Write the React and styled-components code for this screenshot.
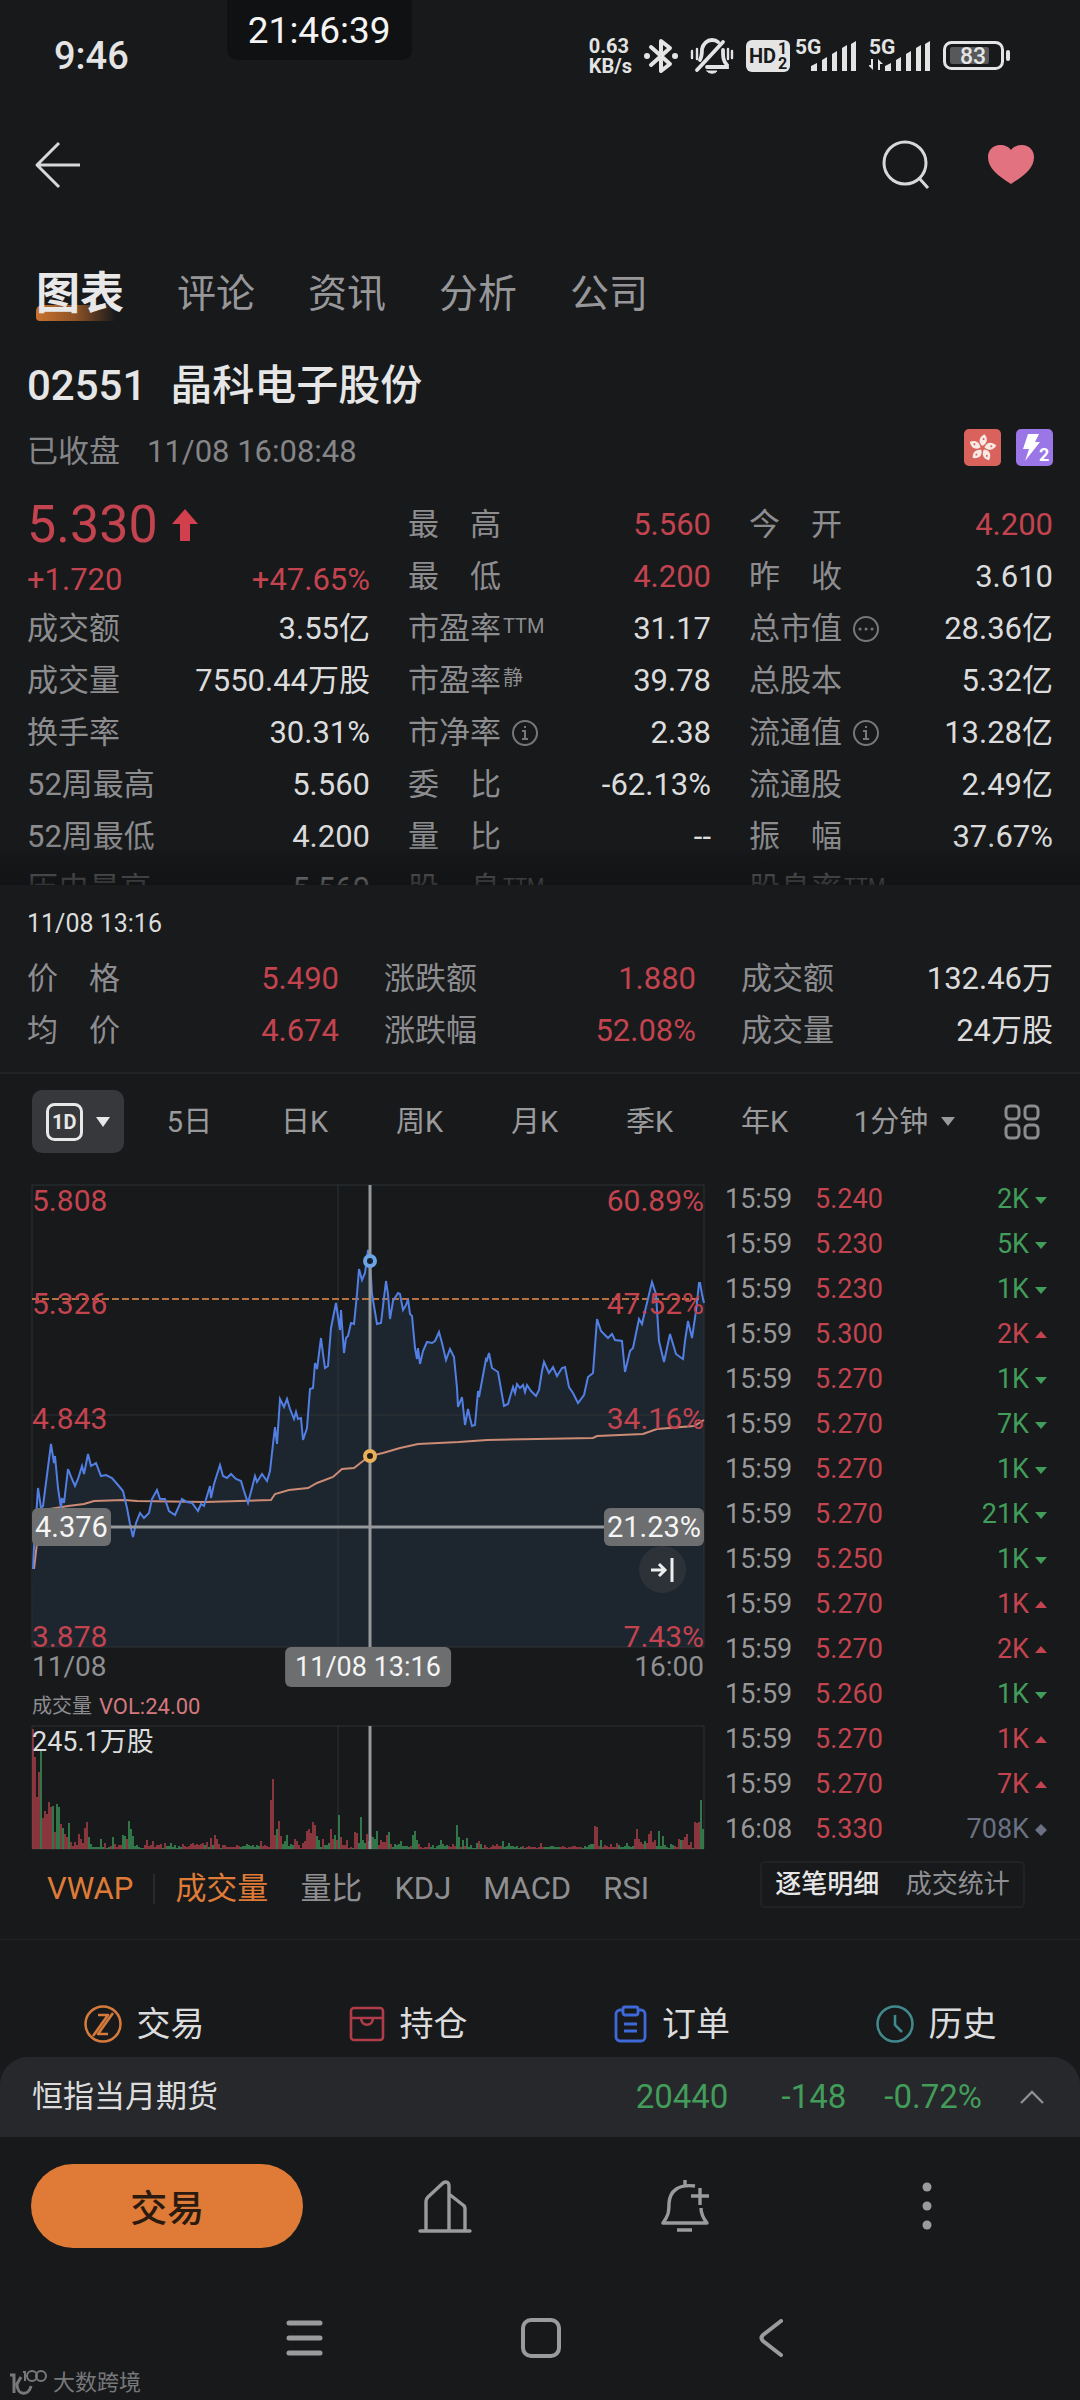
import styled, { createGlobalStyle, ThemeProvider } from 'styled-components';

const theme = {
  colors: {
    bg: '#17191b',
    panel: '#191a1c',
    raised: '#26282b',
    line: '#222326',
    text: '#dcdcdd',
    muted: '#8d8d90',
    red: '#c3434f',
    green: '#429c5a',
    orange: '#df7b37',
    flat: '#6a7182',
    tag: '#6d6e6f',
  },
  sizes: {
    small: '20px',
    tape: '27px',
    toolbar: '29px',
    body: '31px',
  },
};

const GlobalStyle = createGlobalStyle`
  * {
    box-sizing: border-box;
  }

  body {
    margin: 0;
    background: ${theme.colors.bg};
    color: ${theme.colors.text};
    font-family: Roboto, 'Noto Sans CJK SC', sans-serif;
    font-size: ${theme.sizes.body};
  }

  button {
    margin: 0;
    padding: 0;
    border: 0;
    background: none;
    color: inherit;
    font: inherit;
    cursor: pointer;
  }

  svg {
    display: block;
    flex: none;
  }

  dl,
  dt,
  dd,
  h1 {
    margin: 0;
    font-weight: 400;
  }
`;

const tone = ({ theme, $tone }) => theme.colors[$tone || 'text'];

const Page = styled.div`
  display: flex;
  flex-direction: column;
  min-height: 100vh;
`;

/* status bar */

const StatusBar = styled.header`
  position: relative;
  display: flex;
  align-items: center;
  justify-content: space-between;
  height: 112px;
  padding: 0 70px 0 54px;
  color: #e4e4e5;
`;

const Clock = styled.span`
  font-size: 38px;
  font-weight: 500;
  line-height: 40px;
`;

const FloatingClock = styled.div`
  position: absolute;
  top: 0;
  left: 21%;
  padding: 11px 21px 9px;
  border-radius: 0 0 10px 10px;
  background: #101113;
  color: #f4f4f4;
  font-size: 37px;
  line-height: 40px;
`;

const StatusIcons = styled.div`
  display: flex;
  align-items: center;
  gap: 12px;
`;

const CarrierIcons = styled.div`
  display: flex;
  align-items: center;
  gap: 5px;
`;

const NetSpeed = styled.span`
  display: flex;
  flex-direction: column;
  font-size: 20px;
  font-weight: 700;
  line-height: 20px;
`;

const SvgText = styled.text`
  font-family: Roboto, sans-serif;
  font-size: ${props => props.$size}px;
  font-weight: ${props => props.$weight || 700};
`;

/* top navigation */

const TopBar = styled.nav`
  display: flex;
  align-items: center;
  justify-content: space-between;
  height: 106px;
  padding: 0 46px 0 34px;
`;

const TopActions = styled.div`
  display: flex;
  align-items: center;
  gap: 57px;
`;

const Tabs = styled.nav`
  display: flex;
  align-items: center;
  gap: 53px;
  height: 60px;
  margin-top: 46px;
  padding: 0 36px;
`;

const Tab = styled.button`
  position: relative;
  z-index: 0;
  color: ${props => (props.$active ? '#e8e8e8' : '#97979a')};
  font-size: ${props => (props.$active ? '44px' : '39px')};
  font-weight: ${props => (props.$active ? 700 : 400)};
  line-height: 60px;

  &::before {
    content: '';
    display: ${props => (props.$active ? 'block' : 'none')};
    position: absolute;
    z-index: -1;
    left: 0;
    bottom: 3px;
    width: 80px;
    height: 16px;
    border-radius: 6px 0 0 4px;
    background: linear-gradient(90deg, #c9722f, #8d5226 50%, transparent);
  }
`;

/* quote head */

const QuoteHead = styled.section`
  padding: 32px 27px 0;
`;

const StockName = styled.h1`
  display: flex;
  gap: 24px;
  font-size: 42px;
  font-weight: 500;
  line-height: 60px;
  color: #e6e6e6;
`;

const SessionRow = styled.div`
  display: flex;
  align-items: center;
  gap: 27px;
  margin-top: 13px;
  color: #858588;
  line-height: 40px;
`;

const Badges = styled.div`
  display: flex;
  gap: 15px;
  margin-left: auto;
  margin-bottom: 8px;
`;

const Stats = styled.section`
  position: relative;
  display: grid;
  grid-template-columns: 343fr 303fr 304fr;
  gap: 38px;
  height: 397px;
  margin-top: 14px;
  padding: 11px 27px 0;
  overflow: hidden;

  &::after {
    content: '';
    position: absolute;
    inset: auto 0 0;
    height: 44px;
    background: linear-gradient(transparent, rgba(16, 17, 18, 0.75));
  }
`;

const StatColumn = styled.dl`
  min-width: 0;
`;

const StatRow = styled.div`
  display: flex;
  align-items: center;
  justify-content: space-between;
  height: 52px;
  line-height: 52px;
  white-space: nowrap;
`;

const StatLabel = styled.dt`
  display: flex;
  align-items: center;
  gap: ${props => (props.$icon ? '11px' : '2px')};
  color: ${props => props.theme.colors.muted};
`;

const StatValue = styled.dd`
  color: ${tone};
`;

const LabelNote = styled.small`
  align-self: flex-start;
  font-size: 20px;
  line-height: 46px;
`;

const LastPrice = styled.div`
  display: flex;
  align-items: center;
  gap: 14px;
  height: 52px;
  color: ${props => props.theme.colors.red};
  font-size: 52px;
  line-height: 52px;
`;

const Change = styled.div`
  display: flex;
  justify-content: space-between;
  height: 52px;
  padding-top: 3px;
  color: ${props => props.theme.colors.red};
  line-height: 52px;
`;

/* values under the crosshair */

const CursorPanel = styled.section`
  padding: 19px 27px 15px;
  border-bottom: 2px solid ${props => props.theme.colors.line};
  background: ${props => props.theme.colors.panel};
`;

const CursorTime = styled.time`
  display: block;
  margin-bottom: 9px;
  font-size: 25px;
  line-height: 40px;
`;

const CursorGrid = styled.dl`
  display: grid;
  grid-template-columns: repeat(3, 1fr);
  column-gap: 45px;
`;

/* chart */

const PeriodBar = styled.div`
  display: grid;
  grid-template-columns: 100px repeat(6, 115fr) 165fr 61px;
  align-items: center;
  padding: 16px 32px 0;
  color: #9a9a9c;
  font-size: ${props => props.theme.sizes.toolbar};
`;

const ActivePeriod = styled.button`
  display: flex;
  align-items: center;
  justify-content: center;
  gap: 13px;
  width: 92px;
  height: 63px;
  border-radius: 10px;
  background: #37383b;
  color: #e8e8e8;
`;

const Period = styled.button`
  display: flex;
  align-items: center;
  justify-content: center;
  gap: 13px;
  line-height: 62px;
  white-space: nowrap;
`;

const LayoutButton = styled.button`
  justify-self: end;
  padding-right: 8px;
`;

const MarketArea = styled.section`
  display: grid;
  grid-template-columns: 672fr 322fr;
  column-gap: 21px;
  padding: 24px 33px 22px 32px;
  border-bottom: 1px solid #232427;
`;

const ChartColumn = styled.div`
  min-width: 0;
  padding-top: 8px;
`;

const Plot = styled.div`
  position: relative;
  height: ${props => props.$height}px;
`;

const PlotSvg = styled.svg`
  width: 100%;
  height: 100%;
  overflow: visible;
`;

const AxisLabel = styled.span`
  position: absolute;
  top: ${props => props.$top}px;
  ${props => (props.$right ? 'right: 0;' : 'left: 0;')}
  color: ${tone};
  font-size: ${props => (props.$tone ? '30px' : '27px')};
  line-height: 32px;
`;

const CursorTag = styled.span`
  position: absolute;
  padding: 0 3px;
  border-radius: 6px;
  background: ${props => props.theme.colors.tag};
  color: #f5f5f5;
  font-size: 29px;
  line-height: 38px;
`;

const PriceTag = styled(CursorTag)`
  top: 323px;
  ${props => (props.$right ? 'right: 0;' : 'left: 0;')}
`;

const TimeTag = styled(CursorTag)`
  top: 0;
  left: 50%;
  padding: 0 10px;
  transform: translateX(-50%);
  white-space: nowrap;
  font-size: 27px;
  line-height: 40px;
`;

const JumpButton = styled.button`
  position: absolute;
  right: 18px;
  bottom: 54px;
  display: grid;
  place-items: center;
  width: 47px;
  height: 47px;
  border-radius: 50%;
  background: #2c3238;
`;

const TimeAxis = styled.div`
  position: relative;
  display: flex;
  justify-content: space-between;
  color: #8f8f92;
  font-size: 28px;
  line-height: 40px;
`;

const VolumeCaption = styled.div`
  display: flex;
  gap: 7px;
  color: ${props => props.theme.colors.muted};
  font-size: ${props => props.theme.sizes.small};
  line-height: 39px;

  b {
    color: #d3787d;
    font-size: 22px;
    font-weight: 400;
  }
`;

const Indicators = styled.div`
  display: flex;
  align-items: center;
  gap: 32px;
  margin-top: 12px;
  padding-left: 15px;
`;

const Indicator = styled.button`
  color: ${props => (props.$active ? props.theme.colors.orange : '#8f8f92')};
  line-height: 56px;
  white-space: nowrap;
`;

const Separator = styled.i`
  width: 2px;
  height: 30px;
  margin: 0 -12px;
  background: #2a2b2e;
`;

/* trade tape */

const Tape = styled.table`
  width: 100%;
  border-collapse: collapse;
  font-size: ${props => props.theme.sizes.tape};

  td {
    height: 45px;
    padding: 0;
    line-height: 45px;
  }
`;

const TimeCell = styled.td`
  width: 90px;
  color: #98989a;
`;

const PriceCell = styled.td`
  color: ${props => props.theme.colors.red};
`;

const SizeCell = styled.td`
  color: ${tone};

  div {
    display: flex;
    align-items: center;
    justify-content: flex-end;
    gap: 6px;
  }
`;

const TapeSwitch = styled.div`
  display: flex;
  margin: 9px 22px 0 35px;
  border: 2px solid #202225;
  border-radius: 5px;
`;

const TapeMode = styled.button`
  flex: 1;
  color: ${props => (props.$active ? '#e6e6e6' : '#8f8f92')};
  font-size: 26px;
  font-weight: ${props => (props.$active ? 500 : 400)};
  line-height: 43px;
  white-space: nowrap;
`;

/* bottom */

const QuickActions = styled.div`
  display: grid;
  grid-template-columns: repeat(4, 1fr);
  margin-top: 51px;
  padding: 0 12px;
`;

const QuickAction = styled.button`
  display: flex;
  align-items: center;
  justify-content: center;
  gap: 15px;
  height: 66px;
  font-size: 34px;
  line-height: 48px;
`;

const IndexBar = styled.div`
  display: flex;
  align-items: center;
  gap: 38px;
  height: 80px;
  padding: 0 36px 0 32px;
  border-radius: 28px 28px 0 0;
  background: ${props => props.theme.colors.raised};
  line-height: 76px;
`;

const IndexName = styled.span`
  margin-right: auto;
`;

const IndexValue = styled.span`
  min-width: 80px;
  color: ${props => props.theme.colors.green};
  font-size: 33px;
  text-align: right;
`;

const ActionBar = styled.div`
  display: grid;
  grid-template-columns: 293fr 241fr 241fr 241fr;
  align-items: center;
  justify-items: center;
  padding: 27px 33px 0 31px;
`;

const TradeButton = styled.button`
  justify-self: start;
  width: 93%;
  height: 84px;
  border-radius: 42px;
  background: ${props => props.theme.colors.orange};
  color: #2b1a10;
  font-size: 37px;
  font-weight: 500;
`;

const SystemNav = styled.nav`
  display: flex;
  align-items: center;
  justify-content: space-between;
  width: 46%;
  height: 60px;
  margin: 60px 0 0 26.5%;
`;

const Watermark = styled.footer`
  display: flex;
  align-items: center;
  gap: 6px;
  padding: 2px 0 6px 9px;
  color: #77787a;
  font-size: 22px;
  line-height: 26px;
`;

const stats = [
  [
    ['成交额', '3.55亿'],
    ['成交量', '7550.44万股'],
    ['换手率', '30.31%'],
    ['52周最高', '5.560'],
    ['52周最低', '4.200'],
    ['历史最高', '5.560'],
  ],
  [
    ['最　高', '5.560', { tone: 'red' }],
    ['最　低', '4.200', { tone: 'red' }],
    ['市盈率', '31.17', { note: 'TTM' }],
    ['市盈率', '39.78', { note: '静' }],
    ['市净率', '2.38', { icon: 'info' }],
    ['委　比', '-62.13%'],
    ['量　比', '--'],
    ['股　息', '', { note: 'TTM' }],
  ],
  [
    ['今　开', '4.200', { tone: 'red' }],
    ['昨　收', '3.610'],
    ['总市值', '28.36亿', { icon: 'more' }],
    ['总股本', '5.32亿'],
    ['流通值', '13.28亿', { icon: 'info' }],
    ['流通股', '2.49亿'],
    ['振　幅', '37.67%'],
    ['股息率', '', { note: 'TTM' }],
  ],
];

const cursorStats = [
  ['价　格', '5.490', 'red'],
  ['涨跌额', '1.880', 'red'],
  ['成交额', '132.46万'],
  ['均　价', '4.674', 'red'],
  ['涨跌幅', '52.08%', 'red'],
  ['成交量', '24万股'],
];

const periods = ['5日', '日K', '周K', '月K', '季K', '年K'];

const trades = [
  ['15:59', '5.240', '2K', 'green'],
  ['15:59', '5.230', '5K', 'green'],
  ['15:59', '5.230', '1K', 'green'],
  ['15:59', '5.300', '2K', 'red'],
  ['15:59', '5.270', '1K', 'green'],
  ['15:59', '5.270', '7K', 'green'],
  ['15:59', '5.270', '1K', 'green'],
  ['15:59', '5.270', '21K', 'green'],
  ['15:59', '5.250', '1K', 'green'],
  ['15:59', '5.270', '1K', 'red'],
  ['15:59', '5.270', '2K', 'red'],
  ['15:59', '5.260', '1K', 'green'],
  ['15:59', '5.270', '1K', 'red'],
  ['15:59', '5.270', '7K', 'red'],
  ['16:08', '5.330', '708K', 'flat'],
];

const pricePoints =
  '1,384 2,362 6,303 9,323 11,321 19,259 22,278 23,271 26,303 29,323 30,313 32,318 36,284 40,294 43,301 46,294 50,281 52,289 56,269 59,281 64,278 69,291 74,290 80,293 86,300 91,306 95,323 98,339 101,352 104,338 108,328 112,333 117,328 120,314 125,305 128,314 133,314 137,326 143,330 147,321 150,314 155,317 160,318 166,326 169,319 172,321 175,311 178,301 179,313 182,299 188,280 191,291 195,293 199,289 204,294 209,296 212,306 216,318 220,303 223,291 225,297 230,289 235,296 238,286 241,259 243,242 245,259 248,214 252,222 255,214 258,224 262,234 264,227 266,234 269,233 271,255 275,243 278,204 281,203 283,178 285,184 289,153 291,169 293,183 296,181 299,143 304,118 308,145 309,125 312,168 314,153 316,151 319,138 322,139 325,109 327,84 330,95 333,88 336,65 338,76 340,109 345,139 349,138 351,121 354,96 356,109 358,134 361,116 366,108 368,109 371,125 374,120 376,114 378,129 380,131 383,163 385,174 386,163 388,179 391,166 395,157 400,158 403,156 407,147 410,158 414,175 418,164 422,172 425,203 426,222 430,212 433,240 436,224 438,233 440,241 443,240 446,206 447,212 454,174 455,175 457,168 460,183 466,187 472,221 476,219 478,212 481,202 483,208 485,199 488,203 491,200 493,207 495,200 499,206 504,211 507,205 510,186 512,177 517,188 521,182 525,191 530,183 533,182 537,202 541,208 546,218 552,210 556,192 561,188 565,134 569,146 574,151 576,153 580,149 583,155 590,156 593,187 598,166 601,163 607,134 610,139 613,126 620,97 624,109 627,156 632,177 638,149 644,169 648,172 651,174 653,156 656,136 660,153 664,126 667,98 668,98 670,109 672,118';

const averagePoints =
  '2,384 5,358 10,334 18,324 36,321 52,319 62,316 92,315 105,316 174,317 239,315 243,309 257,305 276,303 285,298 301,292 310,284 322,283 331,276 338,271 351,268 368,263 386,259 427,257 455,255 561,253 565,251 611,249 625,244 662,241 672,235';

// [x, height, colour]
const volumeSpikes = [
  [0, 120, 'r'], [2, 92, 'r'], [4, 52, 'r'], [6, 77, 'r'], [8, 98, 'g'], [10, 31, 'r'],
  [12, 38, 'r'], [14, 35, 'r'], [16, 47, 'r'], [18, 42, 'r'], [20, 43, 'g'], [22, 17, 'r'],
  [24, 45, 'g'], [26, 42, 'g'], [28, 25, 'r'], [30, 21, 'g'], [32, 15, 'r'], [34, 12, 'r'],
  [36, 26, 'g'], [46, 15, 'r'], [48, 10, 'r'], [52, 21, 'r'], [54, 27, 'r'], [56, 12, 'g'],
  [68, 10, 'g'], [80, 12, 'g'], [90, 14, 'g'], [92, 13, 'g'], [94, 10, 'r'], [96, 28, 'g'],
  [98, 20, 'g'], [100, 13, 'g'], [114, 9, 'r'], [120, 8, 'r'], [174, 7, 'r'], [178, 11, 'r'],
  [182, 14, 'r'], [184, 10, 'r'], [228, 8, 'r'], [238, 49, 'r'], [240, 70, 'r'], [242, 14, 'r'],
  [244, 20, 'g'], [246, 28, 'r'], [248, 13, 'r'], [254, 14, 'g'], [262, 10, 'r'], [274, 18, 'r'],
  [276, 20, 'r'], [278, 16, 'r'], [280, 27, 'r'], [282, 24, 'r'], [284, 13, 'g'], [290, 10, 'r'],
  [298, 20, 'r'], [302, 14, 'g'], [306, 34, 'g'], [308, 12, 'r'], [322, 17, 'r'], [324, 16, 'r'],
  [328, 32, 'g'], [334, 15, 'r'], [338, 13, 'r'], [340, 12, 'g'], [342, 10, 'g'], [344, 18, 'g'],
  [354, 14, 'r'], [356, 17, 'g'], [368, 8, 'g'], [380, 14, 'g'], [382, 18, 'g'], [384, 9, 'g'],
  [408, 9, 'g'], [424, 24, 'g'], [426, 12, 'g'], [430, 9, 'g'], [434, 11, 'g'], [446, 8, 'r'],
  [470, 8, 'g'], [508, 6, 'r'], [562, 23, 'r'], [564, 22, 'r'], [568, 9, 'g'], [604, 20, 'r'],
  [606, 10, 'r'], [612, 8, 'g'], [616, 15, 'r'], [618, 18, 'r'], [622, 9, 'r'], [626, 18, 'g'],
  [630, 13, 'g'], [648, 9, 'g'], [652, 12, 'r'], [654, 15, 'r'], [662, 27, 'r'], [664, 26, 'r'],
  [666, 27, 'r'], [668, 49, 'g'], [670, 20, 'g'],
];

const volumeBars = Array.from({ length: 336 }, (_, i) => {
  const x = i * 2;
  const spike = volumeSpikes.find(([at]) => at === x);
  if (spike) return { x, h: spike[1], up: spike[2] === 'r' };
  const seed = Math.abs(Math.sin(i * 127.1) * 43758.5) % 1;
  const busy = (x > 240 && x < 360) || x < 60 || x > 600;
  const quiet = x > 476 && x < 556;
  const top = busy ? 9 : quiet ? 2 : 5;
  return { x, h: 1 + Math.round(seed * top), up: Math.sin(i / 3) + seed > 0.4 };
});

const Bluetooth = () => (
  <svg width="34" height="38" viewBox="0 0 34 38" fill="none" stroke="currentColor" strokeWidth="4">
    <path d="M7 10 26 27 17 34V4l9 7L7 28" strokeLinejoin="round" strokeLinecap="round" />
    <circle cx="3" cy="19" r="3" fill="currentColor" stroke="none" />
    <circle cx="31" cy="19" r="3" fill="currentColor" stroke="none" />
  </svg>
);

const MutedBell = () => (
  <svg width="44" height="36" viewBox="0 0 44 36" fill="none" stroke="currentColor" strokeWidth="3.8" strokeLinecap="round">
    <path d="M33 4 7 32M10 22c2-4 2-7 2-11 1-5 5-9 10-9 2 0 4 0 6 2" />
    <path d="M33 12c0 7 0 11 4 15v2H17" />
    <path d="M17 33h10c-2 3-8 3-10 0z" fill="currentColor" strokeWidth="1" />
    <path d="M2 13v7M7 11v10M38 11v10M42 13v7" strokeWidth="2.4" />
  </svg>
);

const HdBadge = () => (
  <svg width="44" height="34" viewBox="0 0 44 34">
    <rect y="1" width="44" height="32" rx="6" fill="currentColor" />
    <SvgText $size={20} x="3" y="24" fill="#17191b">HD</SvgText>
    <SvgText $size={16} x="32" y="15" fill="#17191b">1</SvgText>
    <SvgText $size={16} x="32" y="30" fill="#17191b">2</SvgText>
  </svg>
);

const Signal = ({ active }) => (
  <svg width="62" height="36" viewBox="0 0 62 36" fill="currentColor">
    <SvgText $size={21} x="0" y="16">5G</SvgText>
    <path d="M16 33v-5l6-3v8zM27 33V22l5-3v14zM37 33V16l5-3v20zM47 33V10l5-3v26zM56 33V6l5-3v30z" />
    {active && <path d="M4 21v11L-1 27h3v-6zM9 32V21l5 5h-3v6z" />}
  </svg>
);

const Battery = () => (
  <svg width="67" height="30" viewBox="0 0 67 30" fill="none">
    <rect x="1.5" y="1.5" width="58" height="26" rx="7" stroke="currentColor" strokeWidth="3" />
    <rect x="7" y="6" width="39" height="17" rx="2" fill="#57585a" />
    <rect x="63" y="9" width="4" height="11" rx="2" fill="currentColor" />
    <SvgText $size={23} $weight={500} x="17" y="23" fill="currentColor">83</SvgText>
  </svg>
);

const HongKongFlag = () => (
  <svg width="37" height="37" viewBox="0 0 37 37" role="img" aria-label="港股">
    <rect width="37" height="37" rx="5" fill="#d9635c" />
    {[10, 82, 154, 226, 298].map(angle => (
      <g key={angle} transform={`rotate(${angle} 18.5 19)`}>
        <path d="M18 17c-5-3-5-8 0-12 4 3 5 8 0 12z" fill="#f7e9e4" />
        <circle cx="18" cy="10" r="1" fill="#d9635c" />
      </g>
    ))}
  </svg>
);

const LevelTwo = () => (
  <svg width="37" height="37" viewBox="0 0 37 37">
    <rect width="37" height="37" rx="5" fill="#9a76e6" />
    <path d="M12 5h11l-4 8h5L9 32l4-12H7z" fill="#fff" />
    <SvgText $size={18} x="23" y="32" fill="#fff">2</SvgText>
  </svg>
);

const HintIcon = ({ type }) => (
  <svg width="26" height="26" viewBox="0 0 26 26" fill="none" stroke="#77777a" strokeWidth="2">
    <circle cx="13" cy="13" r="12" />
    {type === 'info' ? (
      <path d="M13 6v2M10 11h3v8M10 19h6" />
    ) : (
      <path d="M7 13h.1M13 13h.1M19 13h.1" strokeWidth="3" strokeLinecap="round" />
    )}
  </svg>
);

const Caret = ({ width = 14, height = 12 }) => (
  <svg width={width} height={height} viewBox="0 0 14 12" preserveAspectRatio="none" fill="currentColor">
    <path d="M0 0h14L7 12z" />
  </svg>
);

const TradeMark = ({ type }) => (
  <svg width="12" height="12" viewBox="0 0 12 12" fill="currentColor">
    {type === 'green' && <path d="M0 3h12L6 10z" />}
    {type === 'red' && <path d="M0 9h12L6 2z" />}
    {type === 'flat' && <path d="M6 0l6 6-6 6-6-6z" />}
  </svg>
);

const quickActions = [
  {
    label: '交易',
    icon: (
      <svg width="38" height="38" viewBox="0 0 38 38" fill="none" stroke="#d57a3b" strokeWidth="2.6">
        <circle cx="19" cy="19" r="17.5" />
        <path d="M14 10h10L9 31M29 8 14 29h10" strokeLinejoin="round" />
      </svg>
    ),
  },
  {
    label: '持仓',
    icon: (
      <svg width="36" height="36" viewBox="0 0 36 36" fill="none" stroke="#b03c49" strokeWidth="2.6">
        <rect x="2" y="2" width="32" height="32" rx="3" />
        <path d="M2 12h10c0 9 12 9 12 0h10M12 12h12" />
      </svg>
    ),
  },
  {
    label: '订单',
    icon: (
      <svg width="33" height="38" viewBox="0 0 33 38" fill="none" stroke="#3f68d8" strokeWidth="2.8">
        <rect x="2" y="5" width="29" height="31" rx="4" />
        <rect x="9" y="2" width="15" height="8" rx="2" fill="#17191b" />
        <path d="M10 19h13M10 26h13" />
      </svg>
    ),
  },
  {
    label: '历史',
    icon: (
      <svg width="38" height="38" viewBox="0 0 38 38" fill="none" stroke="#41898c" strokeWidth="2.6">
        <circle cx="19" cy="19" r="17.5" />
        <path d="M19 10v10l7 7" />
      </svg>
    ),
  },
];

const Stat = ({ label, value, options = {} }) => (
  <StatRow>
    <StatLabel $icon={options.icon}>
      {label}
      {options.note && <LabelNote>{options.note}</LabelNote>}
      {options.icon && <HintIcon type={options.icon} />}
    </StatLabel>
    <StatValue $tone={options.tone}>{value}</StatValue>
  </StatRow>
);

const PriceChart = () => (
  <Plot $height={462}>
    <PlotSvg viewBox="0 0 672 462" preserveAspectRatio="none" fill="none">
      <polygon points={`0,462 ${pricePoints} 672,462`} fill="#1d262f" />
      <path d="M0 0H672V462H0zM306 0V462M0 230H672" stroke="#2f3337" strokeWidth="1" />
      <path d="M0 114H672" stroke="#b8723f" strokeWidth="2" strokeDasharray="7 3" />
      <polyline points={averagePoints} stroke="#cc8b74" strokeWidth="2" />
      <polyline points={pricePoints} stroke="#527fe4" strokeWidth="2" />
      <path d="M338 0V462M0 342H672" stroke="#96999c" strokeWidth="3" />
      <circle cx="338" cy="76" r="5" fill="#14202c" stroke="#6aa5e6" strokeWidth="4" />
      <circle cx="338" cy="271" r="5" fill="#241c14" stroke="#e8b058" strokeWidth="4" />
    </PlotSvg>
    <AxisLabel $tone="red" $top={0}>5.808</AxisLabel>
    <AxisLabel $tone="red" $top={103}>5.326</AxisLabel>
    <AxisLabel $tone="red" $top={218}>4.843</AxisLabel>
    <AxisLabel $tone="red" $top={436}>3.878</AxisLabel>
    <AxisLabel $tone="red" $right $top={0}>60.89%</AxisLabel>
    <AxisLabel $tone="red" $right $top={103}>47.52%</AxisLabel>
    <AxisLabel $tone="red" $right $top={218}>34.16%</AxisLabel>
    <AxisLabel $tone="red" $right $top={436}>7.43%</AxisLabel>
    <PriceTag>4.376</PriceTag>
    <PriceTag $right>21.23%</PriceTag>
    <JumpButton aria-label="跳到最新">
      <svg width="26" height="26" viewBox="0 0 26 26" fill="none" stroke="#eee" strokeWidth="3">
        <path d="M1 13h13M9 7l6 6-6 6M22 1v24" />
      </svg>
    </JumpButton>
  </Plot>
);

const VolumeChart = () => (
  <Plot $height={123}>
    <PlotSvg viewBox="0 0 672 123" preserveAspectRatio="none" fill="none">
      <path d="M0 0H672V123H0zM306 0V123" stroke="#2f3337" strokeWidth="1" />
      {volumeBars.map(({ x, h, up }) => (
        <path
          key={x}
          d={`M${x + 1} 123v-${h}`}
          stroke={up ? '#b03f4b' : '#3d9458'}
          strokeWidth="1.5"
        />
      ))}
      <path d="M338 0V123" stroke="#96999c" strokeWidth="3" />
    </PlotSvg>
    <AxisLabel $top={0}>245.1万股</AxisLabel>
  </Plot>
);

export default function App() {
  return (
    <ThemeProvider theme={theme}>
      <GlobalStyle />
      <Page>
        <StatusBar>
          <Clock>9:46</Clock>
          <FloatingClock>21:46:39</FloatingClock>
          <StatusIcons>
            <NetSpeed>
              <span>0.63</span>
              <span>KB/s</span>
            </NetSpeed>
            <Bluetooth />
            <MutedBell />
            <CarrierIcons>
              <HdBadge />
              <Signal />
            </CarrierIcons>
            <Signal active />
            <Battery />
          </StatusIcons>
        </StatusBar>

        <TopBar>
          <button aria-label="返回">
            <svg width="48" height="48" viewBox="0 0 48 48" fill="none" stroke="#d8d8d8" strokeWidth="3">
              <path d="M25 2 3 24l22 22M3 24h43" strokeLinejoin="round" />
            </svg>
          </button>
          <TopActions>
            <button aria-label="搜索">
              <svg width="50" height="50" viewBox="0 0 50 50" fill="none" stroke="#d8d8d8" strokeWidth="3">
                <circle cx="24" cy="23" r="21" />
                <path d="M38 38l9 10" />
              </svg>
            </button>
            <button aria-label="取消自选">
              <svg width="46" height="40" viewBox="0 0 46 40" fill="#e37280">
                <path d="M23 39C9 30 0 23 0 12 0 5 5 0 12 0c5 0 9 2 11 5 2-3 6-5 11-5 7 0 12 5 12 12 0 11-9 18-23 27z" />
              </svg>
            </button>
          </TopActions>
        </TopBar>

        <Tabs>
          <Tab $active>图表</Tab>
          <Tab>评论</Tab>
          <Tab>资讯</Tab>
          <Tab>分析</Tab>
          <Tab>公司</Tab>
        </Tabs>

        <QuoteHead>
          <StockName>
            <span>02551</span>
            <span>晶科电子股份</span>
          </StockName>
          <SessionRow>
            <span>已收盘</span>
            <time>11/08 16:08:48</time>
            <Badges>
              <HongKongFlag />
              <LevelTwo />
            </Badges>
          </SessionRow>
        </QuoteHead>

        <Stats>
          {stats.map((column, index) => (
            <div key={index}>
              {index === 0 && (
                <>
                  <LastPrice>
                    5.330
                    <svg width="26" height="32" viewBox="0 0 26 32" fill="#d2404d">
                      <path d="M13 0l13 15h-8v17H8V15H0z" />
                    </svg>
                  </LastPrice>
                  <Change>
                    <span>+1.720</span>
                    <span>+47.65%</span>
                  </Change>
                </>
              )}
              <StatColumn>
                {column.map(([label, value, options], row) => (
                  <Stat key={row} label={label} value={value} options={options} />
                ))}
              </StatColumn>
            </div>
          ))}
        </Stats>

        <CursorPanel>
          <CursorTime>11/08 13:16</CursorTime>
          <CursorGrid>
            {cursorStats.map(([label, value, color]) => (
              <Stat key={label} label={label} value={value} options={{ tone: color }} />
            ))}
          </CursorGrid>
        </CursorPanel>

        <PeriodBar>
          <ActivePeriod aria-label="分时">
            <svg width="37" height="38" viewBox="0 0 37 38" fill="none">
              <rect x="1.5" y="1.5" width="34" height="35" rx="7" stroke="currentColor" strokeWidth="3" />
              <SvgText $size={20} x="6" y="26" fill="currentColor">1D</SvgText>
            </svg>
            <Caret width={14} height={10} />
          </ActivePeriod>
          {periods.map(period => (
            <Period key={period}>{period}</Period>
          ))}
          <Period>
            1分钟
            <Caret width={14} height={9} />
          </Period>
          <LayoutButton aria-label="指标布局">
            <svg width="36" height="36" viewBox="0 0 36 36" fill="none" stroke="#8c8c8f" strokeWidth="3">
              <rect x="2" y="2" width="13" height="13" rx="4" />
              <rect x="21" y="2" width="13" height="13" rx="4" />
              <rect x="2" y="21" width="13" height="13" rx="4" />
              <rect x="21" y="21" width="13" height="13" rx="4" />
            </svg>
          </LayoutButton>
        </PeriodBar>

        <MarketArea>
          <ChartColumn>
            <PriceChart />
            <TimeAxis>
              <span>11/08</span>
              <TimeTag>11/08 13:16</TimeTag>
              <span>16:00</span>
            </TimeAxis>
            <VolumeCaption>
              成交量 <b>VOL:24.00</b>
            </VolumeCaption>
            <VolumeChart />
            <Indicators>
              <Indicator $active>VWAP</Indicator>
              <Separator />
              <Indicator $active>成交量</Indicator>
              <Indicator>量比</Indicator>
              <Indicator>KDJ</Indicator>
              <Indicator>MACD</Indicator>
              <Indicator>RSI</Indicator>
            </Indicators>
          </ChartColumn>

          <div>
            <Tape>
              <tbody>
                {trades.map(([time, price, size, direction], index) => (
                  <tr key={index}>
                    <TimeCell>{time}</TimeCell>
                    <PriceCell>{price}</PriceCell>
                    <SizeCell $tone={direction}>
                      <div>
                        {size}
                        <TradeMark type={direction} />
                      </div>
                    </SizeCell>
                  </tr>
                ))}
              </tbody>
            </Tape>
            <TapeSwitch>
              <TapeMode $active>逐笔明细</TapeMode>
              <TapeMode>成交统计</TapeMode>
            </TapeSwitch>
          </div>
        </MarketArea>

        <QuickActions>
          {quickActions.map(({ label, icon }) => (
            <QuickAction key={label}>
              {icon}
              {label}
            </QuickAction>
          ))}
        </QuickActions>

        <IndexBar>
          <IndexName>恒指当月期货</IndexName>
          <IndexValue>20440</IndexValue>
          <IndexValue>-148</IndexValue>
          <IndexValue>-0.72%</IndexValue>
          <button aria-label="展开">
            <svg width="24" height="14" viewBox="0 0 24 14" fill="none" stroke="#8f8f92" strokeWidth="2.4">
              <path d="M1 13 12 2l11 11" />
            </svg>
          </button>
        </IndexBar>

        <ActionBar>
          <TradeButton>交易</TradeButton>
          <button aria-label="公司行动">
            <svg width="54" height="54" viewBox="0 0 54 54" fill="none" stroke="#9b9b9d" strokeWidth="3.4" strokeLinecap="round" strokeLinejoin="round">
              <path d="M2 52h50M8 52V22c0-2 1-3 2-4L25 4c3-2 6-1 6 3v45M31 15l14 11c2 1 2 2 2 4v22" />
            </svg>
          </button>
          <button aria-label="添加提醒">
            <svg width="50" height="52" viewBox="0 0 50 52" fill="none" stroke="#9b9b9d" strokeWidth="3.4">
              <path d="M34 6C17 4 9 11 8 23c0 10-1 13-6 20h44c-4-5-6-9-6-15M24 0v6M16 50h15M30 16h18M39 8v17" strokeLinejoin="round" />
            </svg>
          </button>
          <button aria-label="更多">
            <svg width="10" height="48" viewBox="0 0 10 48" fill="#9b9b9d">
              <circle cx="5" cy="5" r="4.5" />
              <circle cx="5" cy="24" r="4.5" />
              <circle cx="5" cy="43" r="4.5" />
            </svg>
          </button>
        </ActionBar>

        <SystemNav>
          <button aria-label="最近任务">
            <svg width="37" height="36" viewBox="0 0 37 36" stroke="#9b9b9d" strokeWidth="5" strokeLinecap="round">
              <path d="M3 3h31M3 18h31M3 33h31" />
            </svg>
          </button>
          <button aria-label="主屏幕">
            <svg width="40" height="40" viewBox="0 0 40 40" fill="none" stroke="#9b9b9d" strokeWidth="4">
              <rect x="2" y="2" width="36" height="36" rx="8" />
            </svg>
          </button>
          <button aria-label="系统返回">
            <svg width="24" height="38" viewBox="0 0 24 38" fill="none" stroke="#9b9b9d" strokeWidth="4" strokeLinecap="round">
              <path d="M22 2 4 16c-2 2-2 4 0 6l18 14" />
            </svg>
          </button>
        </SystemNav>

        <Watermark>
          <svg width="38" height="26" viewBox="0 0 38 26" fill="none" stroke="currentColor" strokeWidth="3">
            <path d="M1 5h4v18M12 7 8 14c0 12 12 12 14 2" />
            <path d="M14 2h2v9" strokeWidth="2" />
            <circle cx="23" cy="6" r="5" strokeWidth="2" />
            <circle cx="32" cy="6" r="5" strokeWidth="2" />
          </svg>
          大数跨境
        </Watermark>
      </Page>
    </ThemeProvider>
  );
}
